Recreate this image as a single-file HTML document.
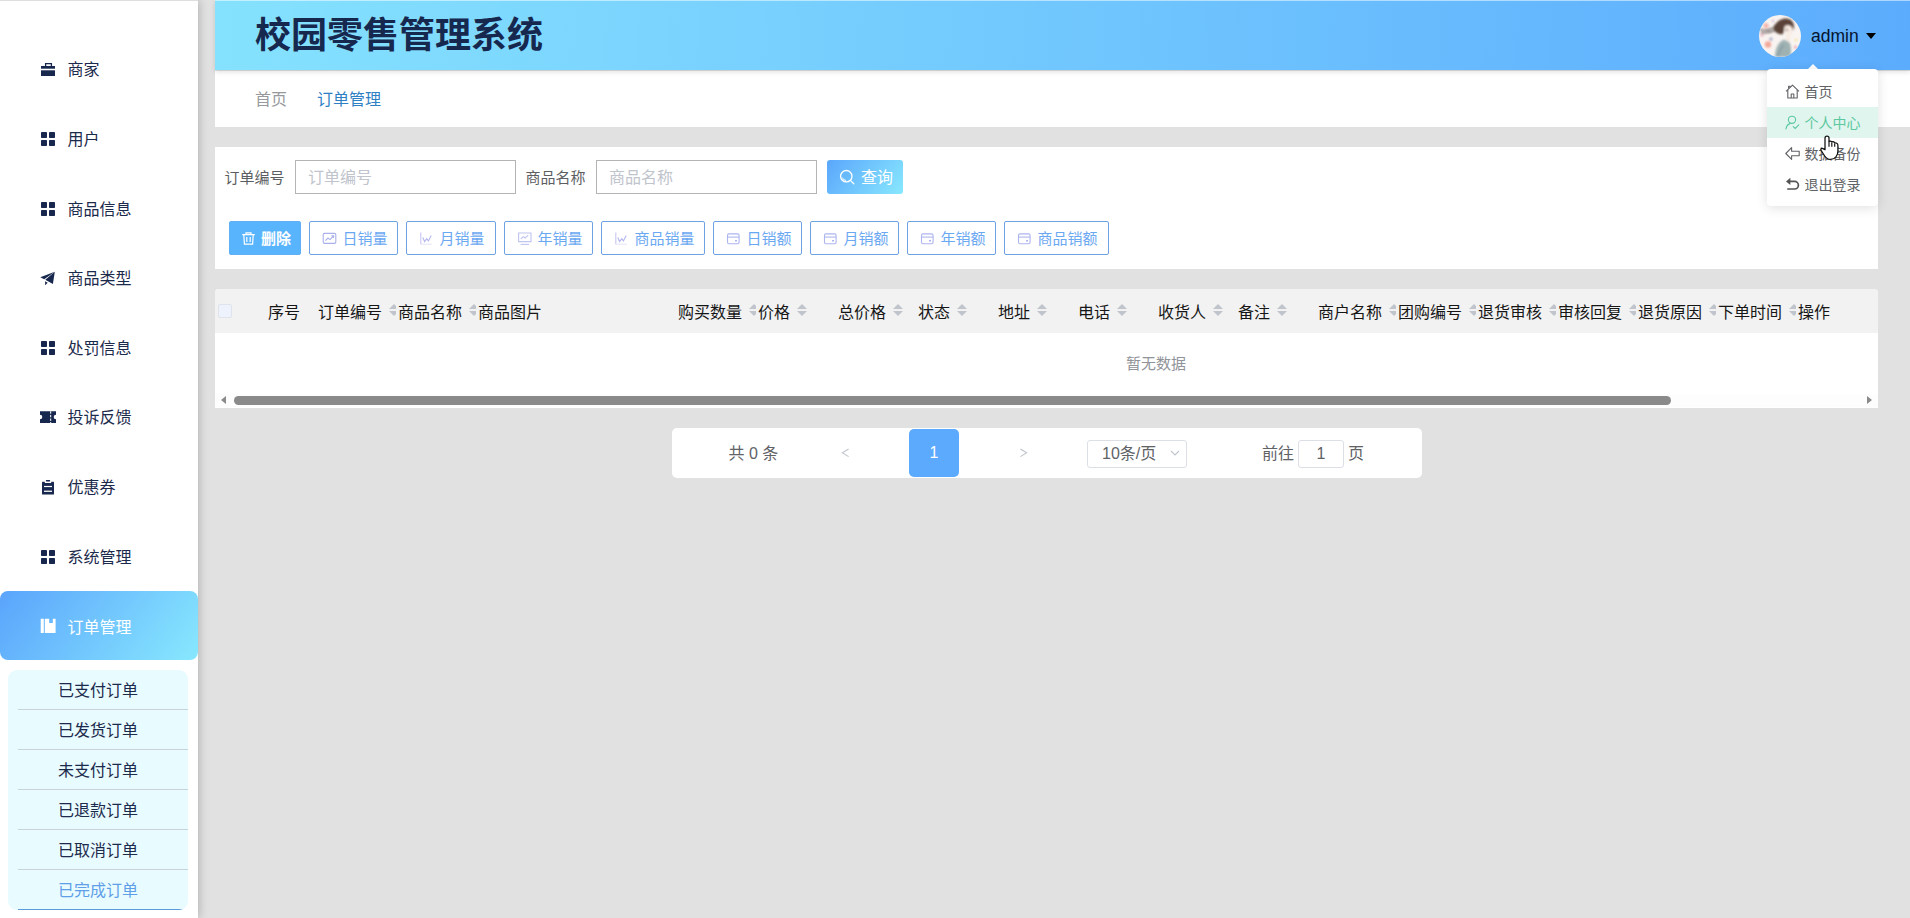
<!DOCTYPE html>
<html lang="zh-CN">
<head>
<meta charset="utf-8">
<title>校园零售管理系统</title>
<style>
*{box-sizing:border-box;margin:0;padding:0}
html,body{width:1910px;height:918px;overflow:hidden}
body{position:relative;background:#e1e1e1;font-family:"Liberation Sans","Noto Sans CJK SC",sans-serif;font-size:16px;color:#1c2a4c}
.abs{position:absolute}
/* sidebar */
#side{position:absolute;left:0;top:0;width:198px;height:918px;background:#fff;box-shadow:1px 0 9px rgba(0,0,0,.22)}
#side:before{content:"";position:absolute;left:0;top:0;width:198px;height:1px;background:#dedede}
.mi{position:absolute;left:0;width:198px;height:70px}
.mi svg{position:absolute;left:40px;top:26px;width:16px;height:16px}
.mi span{position:absolute;left:67.5px;top:24px;line-height:24px;font-size:16px;color:#1c2a4c;white-space:nowrap}
.mi.act{background:linear-gradient(128deg,#5aa4fc 0%,#88e8fe 100%);border-radius:8px}
.mi.act span{color:#fff;top:25px}
#sub{position:absolute;left:8px;top:670px;width:180px;height:240px;background:#e8fbff;border-radius:9px;overflow:hidden}
#sub div{position:absolute;left:10px;width:170px;height:40px;border-bottom:1px solid #c9d3db;line-height:39px;font-size:16px;color:#1c2a4c}
#sub div span{position:absolute;left:0;top:1px;width:160px;text-align:center}
/* header */
#hdr{position:absolute;left:215px;top:0;width:1695px;height:70px;border-top:1px solid rgba(255,255,255,.5);background:linear-gradient(93deg,#85e2fe 0%,#5cacfd 100%);box-shadow:0 2px 5px rgba(0,0,0,.12);z-index:2}
#title{position:absolute;left:40px;top:1px;line-height:68px;font-size:36px;font-weight:bold;color:#17284f;white-space:nowrap}
/* panels */
.panel{position:absolute;left:215px;width:1663px;background:#fff}

/* header right */
#avatar,#uname,#ucaret{z-index:3}
#dd,#ddarrow{z-index:5}
#cursor{z-index:6}
#avatar{position:absolute;left:1759px;top:15px;width:42px;height:42px}
#uname{position:absolute;left:1811px;top:24px;font-size:17.5px;line-height:24px;color:#06142e;white-space:nowrap}
#ucaret{position:absolute;left:1866px;top:33px;width:0;height:0;border-left:5px solid transparent;border-right:5px solid transparent;border-top:6px solid #000}
/* dropdown */
#dd{position:absolute;left:1767px;top:69px;width:111px;height:137px;background:#fff;border-radius:4px;box-shadow:0 2px 12px rgba(0,0,0,.12)}
#ddarrow{position:absolute;left:1807px;top:64px;width:0;height:0;border-left:6px solid transparent;border-right:6px solid transparent;border-bottom:6px solid #fff}
#dd .it{position:absolute;left:0;width:111px;height:31px;font-size:14px;line-height:31px;color:#606266;white-space:nowrap}
#dd .it svg{position:absolute;left:18px;top:8px;width:15px;height:15px}
#dd .it span{position:absolute;left:37.5px;top:1px}
#dd .it.hv{background:#e0f5ee;color:#5cc8a0}
/* breadcrumb */
#crumb span{position:absolute;top:17px;line-height:24px;font-size:16px;white-space:nowrap}
/* search */
.lbl{position:absolute;font-size:15px;line-height:24px;color:#5c5e62;white-space:nowrap}
.inp{position:absolute;width:221px;height:34px;border:1px solid #b4b4b4;background:#fff}
.inp span{position:absolute;left:12px;top:5px;line-height:24px;font-size:16px;color:#c0c4cc;white-space:nowrap}
#qbtn{position:absolute;left:612px;top:13px;width:76px;height:34px;border-radius:3px;background:linear-gradient(128deg,#5aa6fc 0%,#88e8fe 100%)}
#qbtn svg{position:absolute;left:12px;top:9px;width:16px;height:16px}
#qbtn span{position:absolute;left:34px;top:6px;line-height:24px;font-size:16px;color:#fff;white-space:nowrap}
.btn{position:absolute;top:74px;height:34px;border:1px solid #6ea3e3;border-radius:2px;background:#fff;color:#6ba8f2;font-size:15px}
.btn svg{position:absolute;left:12px;top:9px;width:15px;height:15px}
.btn span{position:absolute;left:32.5px;top:5px;line-height:24px;white-space:nowrap}
.btn.del{background:#59b4fe;border-color:#60aef6;color:#fff}
.btn.del svg{left:11px}
.btn.del span{left:31px;font-weight:bold}

/* table */
#table{border-radius:4px 4px 0 0;overflow:hidden}
#thead{position:absolute;left:0;top:0;width:1663px;height:44px;background:#f2f2f2}
.th{position:absolute;top:0;height:44px;width:88px;overflow:hidden;white-space:nowrap;font-size:16px;line-height:24px;color:#161616}
.th b{position:absolute;left:10px;top:12px;font-weight:normal}
.th i{position:absolute;top:15px;width:10px;height:12px}
.th i:before{content:"";position:absolute;left:0;top:0;border:5px solid transparent;border-top:0;border-bottom:5px solid #c0c4cc}
.th i:after{content:"";position:absolute;left:0;top:7px;border:5px solid transparent;border-bottom:0;border-top:5px solid #c0c4cc}
#chk{position:absolute;left:3px;top:15px;width:14px;height:14px;border:1px solid #dfe3ec;background:#edf2fc;border-radius:2px}
#empty{position:absolute;left:0;top:63px;width:1882px;text-align:center;font-size:15px;line-height:24px;color:#909399}
#sbar{position:absolute;left:0;top:105px;width:1663px;height:13px;background:#fdfdfd}
#sbar .thumb{position:absolute;left:19px;top:2px;width:1437px;height:9px;border-radius:5px;background:#8a8a8a}
#sbar .la{position:absolute;left:6px;top:2px;border:4.500px solid transparent;border-left:0;border-right:5px solid #8a8a8a}
#sbar .ra{position:absolute;left:1652px;top:2px;border:4.500px solid transparent;border-right:0;border-left:5px solid #8a8a8a}
/* pager */
#pager{position:absolute;left:672px;top:428px;width:750px;height:50px;background:#fff;border-radius:5px;font-size:16px;color:#606266}
#pager span{position:absolute;line-height:24px;white-space:nowrap}
#pager .box{position:absolute;top:12px;height:28px;border:1px solid #dcdfe6;border-radius:3px;background:#fff}
#pcur{position:absolute;left:237px;top:1px;width:50px;height:48px;border-radius:5px;background:#5baafe;color:#fff;text-align:center;line-height:48px;font-size:16px}
</style>
</head>
<body>
<div id="side">
<div class="mi" style="top:34px"><svg viewBox="0 0 16 16"><path d="M5.6 6V3.6h5.8V6" fill="none" stroke="#17274d" stroke-width="1.3"/><rect x="1" y="6" width="14" height="2.7" fill="#17274d"/><rect x="1" y="10.3" width="14" height="5.7" fill="#17274d"/></svg><span>商家</span></div>
<div class="mi" style="top:104px"><svg viewBox="0 0 16 16"><g fill="#17274d"><rect x="1" y="2" width="6" height="6" rx=".7"/><rect x="9" y="2" width="6" height="6" rx=".7"/><rect x="1" y="10" width="6" height="6" rx=".7"/><rect x="9" y="10" width="6" height="6" rx=".7"/></g></svg><span>用户</span></div>
<div class="mi" style="top:173.5px"><svg viewBox="0 0 16 16"><g fill="#17274d"><rect x="1" y="2" width="6" height="6" rx=".7"/><rect x="9" y="2" width="6" height="6" rx=".7"/><rect x="1" y="10" width="6" height="6" rx=".7"/><rect x="9" y="10" width="6" height="6" rx=".7"/></g></svg><span>商品信息</span></div>
<div class="mi" style="top:243px"><svg viewBox="0 0 16 16"><g fill="#17274d" transform="translate(0,1.1)"><path d="M14.8 1.6L0.3 7.1 4.2 9.1z"/><path d="M14.8 1.6L5.3 9.7 12.9 13.8z"/><path d="M5.1 11.2V15.3L7.7 12.6z"/></g></svg><span>商品类型</span></div>
<div class="mi" style="top:313px"><svg viewBox="0 0 16 16"><g fill="#17274d"><rect x="1" y="2" width="6" height="6" rx=".7"/><rect x="9" y="2" width="6" height="6" rx=".7"/><rect x="1" y="10" width="6" height="6" rx=".7"/><rect x="9" y="10" width="6" height="6" rx=".7"/></g></svg><span>处罚信息</span></div>
<div class="mi" style="top:382px"><svg viewBox="0 0 16 16"><path fill="#17274d" d="M0 3.3h16v3.4a2.3 2.3 0 0 0 0 4.6V15H0v-3.7a2.3 2.3 0 0 0 0-4.6z"/><path d="M10.7 3.3V15" stroke="#fff" stroke-width="1" stroke-dasharray="2.4 1.2"/></svg><span>投诉反馈</span></div>
<div class="mi" style="top:452px"><svg viewBox="0 0 16 16" style="overflow:visible"><g transform="translate(0,1)"><rect x="2" y="2.8" width="12" height="12.8" rx=".6" fill="#17274d"/><rect x="4.8" y=".8" width="6.4" height="3.2" fill="#fff"/><rect x="5.9" y="1" width="4.2" height="1.4" rx=".5" fill="#17274d"/><rect x="4" y="6.9" width="8" height="1.2" fill="#fff"/><rect x="4" y="11.6" width="8" height="1.3" fill="#fff"/></g></svg><span>优惠券</span></div>
<div class="mi" style="top:521.5px"><svg viewBox="0 0 16 16"><g fill="#17274d"><rect x="1" y="2" width="6" height="6" rx=".7"/><rect x="9" y="2" width="6" height="6" rx=".7"/><rect x="1" y="10" width="6" height="6" rx=".7"/><rect x="9" y="10" width="6" height="6" rx=".7"/></g></svg><span>系统管理</span></div>
<div class="mi act" style="top:591px;height:69px"><svg viewBox="0 0 16 16"><path fill="#fff" d="M.7 1.8h3.1V16H.7zM4.8 1.8h4.4v4.3h3.6V1.8h2.8V16H4.8z"/></svg><span>订单管理</span></div>
<div id="sub">
<div style="top:0px"><span>已支付订单</span></div>
<div style="top:40px"><span>已发货订单</span></div>
<div style="top:80px"><span>未支付订单</span></div>
<div style="top:120px"><span>已退款订单</span></div>
<div style="top:160px"><span>已取消订单</span></div>
<div style="top:200px;color:#5f9fe8;border-bottom-color:#5b9bd8"><span>已完成订单</span></div>
</div>
</div>
<div id="hdr"><div id="title">校园零售管理系统</div></div>
<svg id="avatar" viewBox="0 0 42 42"><defs><clipPath id="avc"><circle cx="21" cy="21" r="21"/></clipPath><filter id="avb" x="-20%" y="-20%" width="140%" height="140%"><feGaussianBlur stdDeviation="0.9"/></filter></defs><g clip-path="url(#avc)"><rect width="42" height="42" fill="#f9f4f1"/><g filter="url(#avb)"><circle cx="7" cy="10.500" r="2.600" fill="#f3b4ac"/><circle cx="9" cy="29.500" r="3.200" fill="#f2a79a"/><circle cx="12" cy="24" r="1.600" fill="#9aa0c4"/><circle cx="3" cy="20" r="1.800" fill="#e9b9c6"/><circle cx="36.500" cy="32" r="1.600" fill="#eaa0b0"/><circle cx="37" cy="25" r="1.500" fill="#f4e3a8"/><circle cx="26" cy="33" r="1.300" fill="#f0a7a0"/><circle cx="14" cy="6" r="1.200" fill="#d8b4cf"/><path d="M1 14.500c4 1.200 8.500 1 13-1.500M2 17.500c5 .8 10 0 15-2.500" stroke="#7d7573" stroke-width="1.600" fill="none"/><path d="M14 13c2-5 7-9.500 13-9.500 5 0 8 3.500 8 8.500l-1 4-3.500-5.500c-2.500 0-4 2-5 4.500l-1.500 4c-4 1-8-1-10-6z" fill="#5a4338"/><path d="M25.500 11.500c2-2 6.500-1.500 8 2 .8 3-.5 6.500-2.500 8l-3 .5c-2-3-3.500-7-2.500-10.500z" fill="#f8ece4"/><circle cx="28" cy="14.800" r=".9" fill="#3c2b28"/><path d="M27 21l3.500.5 1 4.500-4 1z" fill="#f6e9e0"/><path d="M16 42c0-8 3-15 9-17.500l5.500 3c2 3.500 1.800 9 1 14.500z" fill="#9fb2b3"/><path d="M19 42c1-5 3-9 5.500-12" stroke="#8395a0" stroke-width="1.200" fill="none"/></g></g></svg><div id="uname">admin</div><div id="ucaret"></div>
<div class="panel" id="crumb" style="top:71px;height:56px;width:1695px"><span style="left:40px;color:#97999c">首页</span><span style="left:102px;color:#2f7fc4">订单管理</span></div>
<div class="panel" id="search" style="top:147px;height:122px">
<div class="lbl" style="left:9.5px;top:19px">订单编号</div>
<div class="inp" style="left:80px;top:13px"><span>订单编号</span></div>
<div class="lbl" style="left:310.5px;top:19px">商品名称</div>
<div class="inp" style="left:381px;top:13px"><span>商品名称</span></div>
<div id="qbtn"><svg viewBox="0 0 16 16"><circle cx="7.3" cy="7.2" r="5.7" fill="none" stroke="#fff" stroke-width="1.3"/><path d="M11.4 11.4L14.8 14.8" stroke="#fff" stroke-width="1.3" stroke-linecap="round"/><path d="M3.4 8.6a4.2 4.2 0 0 0 3.6 2.9" fill="none" stroke="#fff" stroke-width="1"/></svg><span>查询</span></div>
<div class="btn del" style="left:14px;width:72px"><svg viewBox="0 0 15 15"><g fill="none" stroke="#fff" stroke-width="1.2"><path d="M1.2 3.6h12.6M5 3.4V1.8h5v1.6M2.8 3.8l.6 9.4h8.2l.6-9.4M5.8 6v5M9.2 6v5"/></g></svg><span>删除</span></div>
<div class="btn " style="left:94px;width:89px"><svg viewBox="0 0 15 15"><g fill="none" stroke="#a9b0ec" stroke-width="1.1"><rect x="1.2" y="2.4" width="12.6" height="10" rx="1.3"/><path d="M3.4 9.6l2.6-2.6 2 1.6 3.4-3.6M9.4 4.8h2.2V7"/></g></svg><span>日销量</span></div>
<div class="btn " style="left:191px;width:90px"><svg viewBox="0 0 15 15"><g fill="none" stroke="#c9c6f2" stroke-width="1.1"><path d="M1.8 1.6v11.6"/><path d="M3.8 6.6l1.8 4 2.2-3 1.6 2.4 2.8-5.6" stroke="#b4b6ee"/><path d="M1.8 13.2h11" stroke="#e6e4f8"/></g></svg><span>月销量</span></div>
<div class="btn " style="left:289px;width:89px"><svg viewBox="0 0 15 15"><g fill="none" stroke="#bfc4f0" stroke-width="1.1"><path d="M1.6 2h12.4v8.6H1.6z"/><path d="M3.8 8l2.4-2.4 2 1.4 3-2.8"/><path d="M3.6 13.4h8.4"/></g></svg><span>年销量</span></div>
<div class="btn " style="left:386px;width:104px"><svg viewBox="0 0 15 15"><g fill="none" stroke="#c9c6f2" stroke-width="1.1"><path d="M1.8 1.6v11.6"/><path d="M3.8 6.6l1.8 4 2.2-3 1.6 2.4 2.8-5.6" stroke="#b4b6ee"/><path d="M1.8 13.2h11" stroke="#e6e4f8"/></g></svg><span>商品销量</span></div>
<div class="btn " style="left:498px;width:89px"><svg viewBox="0 0 15 15"><g fill="none" stroke="#adb5ee" stroke-width="1.1"><rect x="1.500" y="2.900" width="11.600" height="9.800" rx="1.500"/><path d="M1.500 6.100h11.600"/><path d="M9 9.800h2" stroke-width="1.500"/></g></svg><span>日销额</span></div>
<div class="btn " style="left:595px;width:89px"><svg viewBox="0 0 15 15"><g fill="none" stroke="#adb5ee" stroke-width="1.1"><rect x="1.500" y="2.900" width="11.600" height="9.800" rx="1.500"/><path d="M1.500 6.100h11.600"/><path d="M9 9.800h2" stroke-width="1.500"/></g></svg><span>月销额</span></div>
<div class="btn " style="left:692px;width:89px"><svg viewBox="0 0 15 15"><g fill="none" stroke="#adb5ee" stroke-width="1.1"><rect x="1.500" y="2.900" width="11.600" height="9.800" rx="1.500"/><path d="M1.500 6.100h11.600"/><path d="M9 9.800h2" stroke-width="1.500"/></g></svg><span>年销额</span></div>
<div class="btn " style="left:789px;width:105px"><svg viewBox="0 0 15 15"><g fill="none" stroke="#adb5ee" stroke-width="1.1"><rect x="1.500" y="2.900" width="11.600" height="9.800" rx="1.500"/><path d="M1.500 6.100h11.600"/><path d="M9 9.800h2" stroke-width="1.500"/></g></svg><span>商品销额</span></div>
</div>
<div class="panel" id="table" style="top:289px;height:119px">
<div id="thead"><div id="chk"></div>
<div class="th" style="left:43px;width:88px"><b>序号</b></div>
<div class="th" style="left:93px;width:88px"><b>订单编号</b><i style="left:81px"></i></div>
<div class="th" style="left:173px;width:88px"><b>商品名称</b><i style="left:81px"></i></div>
<div class="th" style="left:253px;width:200px"><b>商品图片</b></div>
<div class="th" style="left:453px;width:88px"><b>购买数量</b><i style="left:81px"></i></div>
<div class="th" style="left:533px;width:88px"><b>价格</b><i style="left:49px"></i></div>
<div class="th" style="left:613px;width:88px"><b>总价格</b><i style="left:65px"></i></div>
<div class="th" style="left:693px;width:88px"><b>状态</b><i style="left:49px"></i></div>
<div class="th" style="left:773px;width:88px"><b>地址</b><i style="left:49px"></i></div>
<div class="th" style="left:853px;width:88px"><b>电话</b><i style="left:49px"></i></div>
<div class="th" style="left:933px;width:88px"><b>收货人</b><i style="left:65px"></i></div>
<div class="th" style="left:1013px;width:88px"><b>备注</b><i style="left:49px"></i></div>
<div class="th" style="left:1093px;width:88px"><b>商户名称</b><i style="left:81px"></i></div>
<div class="th" style="left:1173px;width:88px"><b>团购编号</b><i style="left:81px"></i></div>
<div class="th" style="left:1253px;width:88px"><b>退货审核</b><i style="left:81px"></i></div>
<div class="th" style="left:1333px;width:88px"><b>审核回复</b><i style="left:81px"></i></div>
<div class="th" style="left:1413px;width:88px"><b>退货原因</b><i style="left:81px"></i></div>
<div class="th" style="left:1493px;width:88px"><b>下单时间</b><i style="left:81px"></i></div>
<div class="th" style="left:1573px;width:88px"><b>操作</b></div>
</div>
<div id="empty">暂无数据</div>
<div id="sbar"><div class="la"></div><div class="thumb"></div><div class="ra"></div></div>
</div>
<div id="pager">
<span style="left:56.5px;top:13.5px">共 0 条</span>
<svg style="position:absolute;left:169px;top:20px;width:10px;height:10px" viewBox="0 0 10 10"><path d="M7.600 1L1.400 4.800 7.600 8.600" fill="none" stroke="#c0c4cc" stroke-width="1.100"/></svg>
<div id="pcur">1</div>
<svg style="position:absolute;left:346px;top:20px;width:10px;height:10px" viewBox="0 0 10 10"><path d="M2.400 1L8.600 4.800 2.400 8.600" fill="none" stroke="#c0c4cc" stroke-width="1.100"/></svg>
<div class="box" style="left:415px;width:100px"></div>
<span style="left:430px;top:13.5px">10条/页</span>
<svg style="position:absolute;left:498px;top:21px;width:10px;height:8px" viewBox="0 0 10 8"><path d="M1 2l4 4 4-4" fill="none" stroke="#c0c4cc" stroke-width="1.100"/></svg>
<span style="left:590px;top:13.5px">前往</span>
<div class="box" style="left:626px;width:46px"></div>
<span style="left:626px;top:13.5px;width:46px;text-align:center">1</span>
<span style="left:676px;top:13.5px">页</span>
</div>
<div id="ddarrow"></div>
<div id="dd">
<div class="it" style="top:7px"><svg viewBox="0 0 15 15"><g fill="none" stroke="#606266" stroke-width="1.1" stroke-linejoin="round"><path d="M1 7.4L7.5 1.2 14 7.4"/><path d="M2.8 6v8h9.4V6"/><path d="M6.2 14v-4h2.6v4"/><path d="M3.6 4.6V2.2h1.6v1"/></g></svg><span>首页</span></div>
<div class="it hv" style="top:38px"><svg viewBox="0 0 15 15"><g fill="none" stroke="#5cc8a0" stroke-width="1.1" stroke-linecap="round"><circle cx="7" cy="4.8" r="3.6"/><path d="M1 14c.4-3 2-4.8 4-5.4"/><path d="M8.2 11.6l2 1.8 3.6-3.6"/></g></svg><span>个人中心</span></div>
<div class="it" style="top:69px"><svg viewBox="0 0 15 15"><path d="M6.6 1.6L.8 7.5l5.8 5.9v-3.6h7.6V5.2H6.6z" fill="none" stroke="#606266" stroke-width="1.1" stroke-linejoin="round"/></svg><span>数据备份</span></div>
<div class="it" style="top:100px"><svg viewBox="0 0 15 15"><g fill="none" stroke="#555" stroke-width="1.7"><path d="M3.4 4.4h6.2a3.8 3.8 0 0 1 0 7.6H2.2"/></g><path d="M5.4 0.8L1 4.4l4.4 3.6z" fill="#555"/></svg><span>退出登录</span></div>
</div>
<svg id="cursor" style="position:absolute;left:1810px;top:128px;width:40px;height:40px" viewBox="0 0 40 40"><path d="M15 21.800V10.200a2 2 0 0 1 4 0V13.400C19.900 12.900 21.200 13.100 21.800 13.900C22.700 13.600 24.100 13.900 24.700 14.800C25.800 14.600 27.900 15.200 27.900 17.200V23C27.900 27.500 25.300 31.400 20.500 31.400C17.600 31.400 15.900 29.900 14.700 28L11.200 22.700C10.200 21.100 11.500 19.700 13 20.600Z" fill="#fff" stroke="#111" stroke-width="1.250" stroke-linejoin="round"/><path d="M19 13.400V18.700M21.800 14.600V18.700M24.700 15.500V18.700" stroke="#111" stroke-width="1.150" fill="none"/></svg>
</body>
</html>
